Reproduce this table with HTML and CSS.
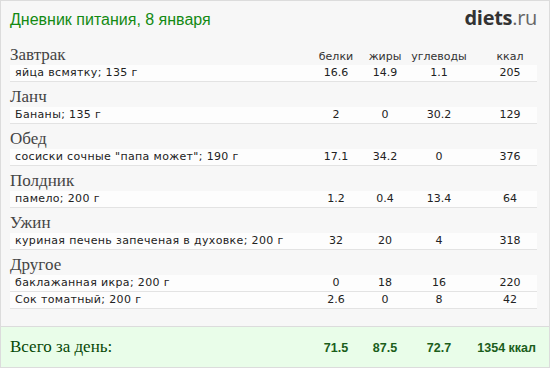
FILE: index.html
```html
<!DOCTYPE html>
<html lang="ru">
<head>
<meta charset="utf-8">
<title>Дневник питания</title>
<link rel="stylesheet" href="styles.css">
</head>
<body>
<div class="diary">
  <header class="top">
    <h1 class="title">Дневник питания, 8 января</h1>
    <div class="logo"><b>diets</b>.ru</div>
  </header>
  <div class="meals">
    <section class="meal">
      <div class="meal-head grid">
        <h2 class="meal-name">Завтрак</h2>
        <span class="col-label">белки</span>
        <span class="col-label">жиры</span>
        <span class="col-label">углеводы</span>
        <span class="col-label kcal">ккал</span>
      </div>
      <div class="row grid"><span class="name">яйца всмятку; 135 г</span><span class="num">16.6</span><span class="num">14.9</span><span class="num">1.1</span><span class="num kcal">205</span></div>
    </section>
    <section class="meal">
      <div class="meal-head grid"><h2 class="meal-name">Ланч</h2></div>
      <div class="row grid"><span class="name">Бананы; 135 г</span><span class="num">2</span><span class="num">0</span><span class="num">30.2</span><span class="num kcal">129</span></div>
    </section>
    <section class="meal">
      <div class="meal-head grid"><h2 class="meal-name">Обед</h2></div>
      <div class="row grid"><span class="name">сосиски сочные "папа может"; 190 г</span><span class="num">17.1</span><span class="num">34.2</span><span class="num">0</span><span class="num kcal">376</span></div>
    </section>
    <section class="meal">
      <div class="meal-head grid"><h2 class="meal-name">Полдник</h2></div>
      <div class="row grid"><span class="name">памело; 200 г</span><span class="num">1.2</span><span class="num">0.4</span><span class="num">13.4</span><span class="num kcal">64</span></div>
    </section>
    <section class="meal">
      <div class="meal-head grid"><h2 class="meal-name">Ужин</h2></div>
      <div class="row grid"><span class="name">куриная печень запеченая в духовке; 200 г</span><span class="num">32</span><span class="num">20</span><span class="num">4</span><span class="num kcal">318</span></div>
    </section>
    <section class="meal">
      <div class="meal-head grid"><h2 class="meal-name">Другое</h2></div>
      <div class="row grid"><span class="name">баклажанная икра; 200 г</span><span class="num">0</span><span class="num">18</span><span class="num">16</span><span class="num kcal">220</span></div>
      <div class="row grid"><span class="name">Сок томатный; 200 г</span><span class="num">2.6</span><span class="num">0</span><span class="num">8</span><span class="num kcal">42</span></div>
    </section>
  </div>
  <footer class="total grid">
    <span class="total-label">Всего за день:</span>
    <span class="total-num">71.5</span>
    <span class="total-num">87.5</span>
    <span class="total-num">72.7</span>
    <span class="total-num total-kcal">1354 ккал</span>
  </footer>
</div>
</body>
</html>
```
FILE: styles.css
```css
html, body {
  margin: 0;
  padding: 0;
  background: #ffffff;
}

.diary {
  width: 550px;
  height: 368px;
  box-sizing: border-box;
  border: 1px solid #dcdcdc;
  background: #f7f7f7;
  display: flex;
  flex-direction: column;
}

.top {
  height: 39px;
  box-sizing: border-box;
  padding: 6px 12px 0 9px;
  display: flex;
  justify-content: space-between;
  align-items: baseline;
}

.title {
  margin: 0;
  font-family: "Liberation Sans", Arial, sans-serif;
  font-weight: normal;
  font-size: 16px;
  line-height: 22px;
  color: #138a13;
}

.logo {
  font-family: "Open Sans", "Liberation Sans", sans-serif;
  font-size: 20px;
  line-height: 22px;
  color: #666;
  letter-spacing: -0.3px;
}

.logo b {
  font-weight: 700;
  color: #333;
}

.meals {
  flex: 1;
  padding: 0 12px 0 9px;
}

.grid {
  display: grid;
  grid-template-columns: 1fr 48px 50px 58px 69px;
}

.meal-head {
  padding: 6px 0 1px;
  align-items: baseline;
}

.meal-name {
  margin: 0;
  font-family: "Liberation Serif", "Times New Roman", serif;
  font-weight: normal;
  font-size: 17px;
  line-height: 18px;
  color: #444;
}

.col-label {
  font-family: "DejaVu Sans", Verdana, sans-serif;
  font-size: 11px;
  color: #333;
  text-align: center;
}

.row {
  height: 16px;
  background: #fdfdfd;
  border-bottom: 1px solid #e3e3e3;
  font-family: "DejaVu Sans", Verdana, sans-serif;
  font-size: 11px;
  line-height: 16px;
  color: #222;
}

.name {
  padding-left: 5px;
  white-space: nowrap;
  letter-spacing: 0.35px;
}

.num {
  text-align: center;
}

.kcal {
  padding-left: 15px;
}

.total {
  height: 41px;
  box-sizing: border-box;
  border-top: 1px solid #dcdcdc;
  background: #e9fde9;
  padding: 10px 12px 0 9px;
  align-items: baseline;
}

.total-label {
  font-family: "Liberation Serif", "Times New Roman", serif;
  font-size: 17px;
  line-height: 20px;
  color: #064806;
}

.total-num {
  font-family: "Liberation Sans", Arial, sans-serif;
  font-weight: bold;
  font-size: 12.5px;
  color: #1b5e1b;
  text-align: center;
}

.total-kcal {
  text-align: right;
  padding-right: 1px;
  white-space: nowrap;
}
```
